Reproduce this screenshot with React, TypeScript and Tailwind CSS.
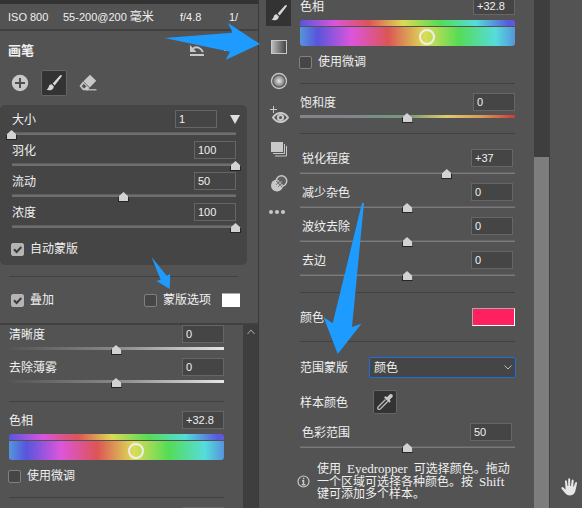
import React, { useState } from "react";

const songti = "font-['Liberation_Sans','Noto_Sans_CJK_SC',sans-serif]";

function NumberBox({ label, value }: { label: string; value: string }) {
  return (
    <input
      type="text"
      aria-label={label}
      defaultValue={value}
      className="block h-[18px] w-[42px] shrink-0 border border-[#666] bg-[#454545] pl-[3px] text-[11px] leading-4 text-[#f0f0f0] outline-none"
    />
  );
}

type Track = "plain" | "thin" | "gray" | "saturation";

const tracks: Record<Track, string> = {
  plain: "bg-[linear-gradient(#5e5e5e_0_1px,#6e6e6e_1px)] bg-size-[100%_3px] bg-[position:0_2px]",
  thin: "bg-[linear-gradient(#646464_0_1px,#7a7a7a_1px)] bg-size-[100%_2px] bg-[position:0_3px]",
  gray: "bg-[linear-gradient(90deg,#555,#888_50%,#e6e6e6)] bg-size-[100%_3px] bg-[position:0_2px]",
  saturation:
    "bg-[linear-gradient(90deg,#878389,#87818b_18%,#75918b_35%,#769976_50%,#dccc6d_68%,#db9c58_84%,#cd3a3a)] bg-size-[100%_3px] bg-[position:0_2px]",
};

function Slider({ label, value, min = 0, max = 100, track = "plain" }: { label: string; value: number; min?: number; max?: number; track?: Track }) {
  return (
    <div className={`h-[10px] bg-no-repeat ${tracks[track]}`}>
      <input
        type="range"
        aria-label={label}
        min={min}
        max={max}
        defaultValue={value}
        className="-mx-[6px] block h-[10px] w-[calc(100%+11px)] cursor-pointer appearance-none bg-transparent outline-none [&::-webkit-slider-thumb]:h-[10px] [&::-webkit-slider-thumb]:w-[11px] [&::-webkit-slider-thumb]:appearance-none [&::-webkit-slider-thumb]:bg-[linear-gradient(90deg,#252525_1px,transparent_1px_10px,#252525_10px),linear-gradient(#d2d2d2_9px,#252525_9px)] [&::-webkit-slider-thumb]:[clip-path:polygon(50%_0,100%_50%,100%_100%,0_100%,0_50%)]"
      />
    </div>
  );
}

type RowProps = { label: string; text: string; value: number; min?: number; max?: number; track?: Track };

function SliderRow({ label, text, value, min, max, track, inset = "" }: RowProps & { inset?: string }) {
  return (
    <div>
      <div className={`mb-[2px] flex items-center justify-between ${inset}`}>
        <span className="pt-[2px]">{label}</span>
        <NumberBox label={label} value={text} />
      </div>
      <Slider label={label} value={value} min={min} max={max} track={track} />
    </div>
  );
}

function Check({ label, checked = false }: { label: string; checked?: boolean }) {
  const [on, setOn] = useState(checked);
  return (
    <label className="flex items-center gap-[6px]">
      <span className="grid size-[13px] shrink-0">
        <input
          type="checkbox"
          checked={on}
          onChange={() => setOn(!on)}
          className="col-start-1 row-start-1 size-[13px] appearance-none rounded-[2px] border border-[#808080] bg-[#464646] checked:border-[#b4b4b4] checked:bg-[#b4b4b4]"
        />
        {on && (
          <svg viewBox="0 0 13 13" className="pointer-events-none col-start-1 row-start-1 size-[13px]" fill="none" stroke="#3c3c3c" strokeWidth="2">
            <path d="M3 6.3 5.6 9 10.3 4" />
          </svg>
        )}
      </span>
      <span>{label}</span>
    </label>
  );
}

function Hue() {
  return (
    <div>
      <div className="mb-[5px] flex items-center justify-between">
        <span className="pt-[2px]">色相</span>
        <NumberBox label="色相" value="+32.8" />
      </div>
      <div className="h-[6px] rounded-t-[3px] bg-[linear-gradient(90deg,#5955dc,#d955dc_16%,#dc5555_32%,#dcda55_48%,#55dc55_65%,#55dcda_82%,#5959dc_97%,#6a55dc)]" />
      <div className="mt-px h-[19px] rounded-b-[3px] bg-[linear-gradient(90deg,#5595dc,#5755dc_8%,#dc55dc_24%,#dc5555_41%,#dcdc55_58%,#55dc55_74%,#55dcdc_91%,#5595dc)]">
        <input
          type="range"
          aria-label="色相"
          min={-180}
          max={180}
          step={0.1}
          defaultValue={32.8}
          className="-mx-2 block h-[20px] w-[calc(100%+16px)] appearance-none bg-transparent outline-none [&::-webkit-slider-thumb]:size-4 [&::-webkit-slider-thumb]:appearance-none [&::-webkit-slider-thumb]:rounded-full [&::-webkit-slider-thumb]:border-2 [&::-webkit-slider-thumb]:border-[#eee]"
        />
      </div>
    </div>
  );
}

function Brush() {
  return (
    <svg viewBox="0 0 18 18" className="size-[18px]" fill="#d6d6d6">
      <path d="M16.8 1.2c-1-.6-2 .4-3 1.5L7.7 9.4l2 2 5.6-7.2c.8-1 2-2.4 1.5-3zM6.7 10.2c-1.5 0-2.5.8-2.9 2.2-.3 1.3-1 2.6-2.6 3.2 3 1.5 7.2.7 7.7-3.2Z" />
    </svg>
  );
}

function Eraser() {
  return (
    <svg viewBox="0 0 18 18" className="size-[18px]" fill="#c8c8c8">
      <path d="M11 .8 17.200 6.800 10.800 13.600 4.400 7.200Z" />
      <path d="m4 7.600 6.400 6.400-1.600 2.200H4L.5 12ZM4.800 9.800 2.600 12.200 5 14.600 7.400 12.400Z" fillRule="evenodd" />
      <path d="M7 15.200h10.500v1.200H7z" />
    </svg>
  );
}

function LeftPanel() {
  return (
    <aside className="flex w-[259px] shrink-0 flex-col overflow-hidden border-r border-[#393939]">
      <div className="h-1 shrink-0 bg-[#333]" />
      <div className="flex h-[25px] shrink-0 items-center pl-2 text-[11px] whitespace-pre">
        <span className="w-[55px]">ISO 800</span>
        <span className="w-[117px]">
          55-200@200 <span className="text-[12px]">毫米</span>
        </span>
        <span className="w-[49px]">f/4.8</span>
        <span>1/</span>
      </div>
      <div className="h-[2px] shrink-0 bg-[#414141]" />
      <div className="flex h-[37px] shrink-0 items-center justify-between pr-[28px] pl-2">
        <h1 className="pt-[2px] text-[13px] font-bold">画笔</h1>
        <div className="flex items-center gap-5">
          <button aria-label="重置">
            <svg viewBox="0 0 14 12" className="h-3 w-[14px]" fill="none" stroke="#c8c8c8">
              <path d="M0 11h14" strokeWidth="2" />
              <path d="M3 4.500q6-3.500 10 3.500" strokeWidth="2" />
              <path d="M0 1v7h6.500Z" fill="#c8c8c8" stroke="none" />
            </svg>
          </button>
          <button aria-label="更多" className="flex gap-[2px]">
            <i className="size-[2px] bg-[#c8c8c8]" />
            <i className="size-[2px] bg-[#c8c8c8]" />
          </button>
        </div>
      </div>
      <div className="mt-[2px] flex h-[26px] shrink-0 items-center pl-[11px]">
        <button aria-label="新建">
          <svg viewBox="0 0 18 18" className="size-[18px]">
            <circle cx="9" cy="9" r="8.200" fill="#c8c8c8" />
            <path d="M9 4v10M4 9h10" stroke="#505050" strokeWidth="2" />
          </svg>
        </button>
        <button aria-label="画笔" className="ml-3 grid size-[26px] place-items-center rounded-[2px] border border-[#656565] bg-[#333]">
          <Brush />
        </button>
        <button aria-label="橡皮擦" className="ml-3">
          <Eraser />
        </button>
      </div>
      <section className="mt-[9px] mr-[11px] h-[160px] shrink-0 rounded-[5px] bg-[#454545] pt-[5px] pr-[11px] pl-3">
        <div className="mb-[2px] flex items-center">
          <span className="flex-1 pt-[2px]">大小</span>
          <NumberBox label="大小" value="1" />
          <button aria-label="展开" className="-mr-1 ml-[13px] border-x-5 border-t-9 border-x-transparent border-t-[#e0e0e0]" />
        </div>
        <Slider label="大小" value={0} />
        <div className="mt-px flex flex-col gap-px">
          <SliderRow label="羽化" text="100" value={100} />
          <SliderRow label="流动" text="50" value={50} />
          <SliderRow label="浓度" text="100" value={100} />
        </div>
        <div className="mt-2 -ml-px flex">
          <Check label="自动蒙版" checked />
        </div>
      </section>
      <hr className="mt-[11px] mr-5 ml-[9px] border-[#414141]" />
      <div className="flex h-[46px] shrink-0 items-center pr-[18px] pl-[11px]">
        <Check label="叠加" checked />
        <div className="ml-auto flex items-center gap-[11px]">
          <Check label="蒙版选项" />
          <button aria-label="蒙版颜色" className="h-[14px] w-[18px] border-t border-[#aaa] bg-white" />
        </div>
      </div>
      <div className="h-[2px] shrink-0 bg-[#414141]" />
      <div className="flex min-h-0 flex-1">
        <div className="min-w-0 flex-1 pr-[19px] pl-[9px]">
          <div className="flex flex-col gap-[3px]">
            <SliderRow label="清晰度" text="0" value={0} min={-100} track="gray" />
            <SliderRow label="去除薄雾" text="0" value={0} min={-100} track="gray" />
          </div>
          <hr className="mt-[13px] mb-[9px] border-[#414141]" />
          <Hue />
          <div className="mt-2 -ml-px flex">
            <Check label="使用微调" />
          </div>
          <hr className="mt-[13px] mb-[9px] border-[#414141]" />
          <div className="flex justify-end">
            <NumberBox label="饱和度" value="" />
          </div>
        </div>
        <div className="flex w-[15px] shrink-0 justify-center bg-[#3e3e3e] pt-1">
          <svg viewBox="0 0 8 6" className="h-[6px] w-2" fill="none" stroke="#aaa">
            <path d="m.5 5 3.500-4 3.500 4" />
          </svg>
        </div>
      </div>
    </aside>
  );
}

function ToolRail() {
  return (
    <nav aria-label="蒙版工具" className="flex w-[41px] shrink-0 flex-col items-start pl-[7px]">
      <button aria-label="画笔" className="grid h-[26px] w-[25px] place-items-center bg-[#333]">
        <Brush />
      </button>
      <button aria-label="线性渐变" className="mt-[14px] ml-[5px] h-[14px] w-4 border border-[#c8c8c8] bg-linear-to-r from-[#bbb] to-[#484848]" />
      <button aria-label="径向渐变" className="mt-[18px] ml-[4px]">
        <svg viewBox="0 0 18 18" className="size-[18px]">
          <defs>
            <radialGradient id="radial-tool">
              <stop offset="0.100" stopColor="#ddd" />
              <stop offset="1" stopColor="#777" />
            </radialGradient>
          </defs>
          <circle cx="9" cy="9" r="7.500" fill="#535353" stroke="#c8c8c8" strokeWidth="1.300" />
          <circle cx="9" cy="9" r="5.800" fill="url(#radial-tool)" />
        </svg>
      </button>
      <button aria-label="红眼" className="mt-[16px] ml-[3px]">
        <svg viewBox="0 0 20 18" className="h-[18px] w-5" fill="none" stroke="#c8c8c8">
          <path d="M4.500 0v7M1 3.500h7" />
          <path d="M4 11.500q3-4.500 7.500-4.500t7.500 4.500q-3 4.500-7.500 4.500t-7.500-4.500Z" strokeWidth="2" />
          <circle cx="11.500" cy="11.500" r="3.600" fill="#c8c8c8" stroke="none" />
          <circle cx="11.500" cy="11.500" r="1.500" fill="#535353" stroke="none" />
        </svg>
      </button>
      <button aria-label="快照" className="mt-[18px] ml-[5px]">
        <svg viewBox="0 0 16 15" className="h-[15px] w-4">
          <path d="M0 0h12v10H0z" fill="#c8c8c8" />
          <path d="M13.500 2v9.500H2M15.500 4v10H4" fill="none" stroke="#c8c8c8" />
        </svg>
      </button>
      <button aria-label="预设" className="mt-[18px] ml-[5px]">
        <svg viewBox="0 0 17 17" className="size-[17px]">
          <circle cx="6" cy="10.500" r="6" fill="#c8c8c8" />
          <circle cx="10.500" cy="6" r="5.300" fill="#777" fillOpacity="0.400" stroke="#c8c8c8" strokeWidth="1.400" />
          <path d="m5 6 6 6M7 4l6 6M5 10l7-7M7 12l6-6" stroke="#535353" strokeWidth=".6" />
        </svg>
      </button>
      <button aria-label="更多" className="mt-[18px] ml-[3px] flex gap-[2px]">
        <i className="size-1 rounded-full bg-[#c8c8c8]" />
        <i className="size-1 rounded-full bg-[#c8c8c8]" />
        <i className="size-1 rounded-full bg-[#c8c8c8]" />
      </button>
    </nav>
  );
}

function RightPanel() {
  return (
    <main className="min-w-0 flex-1 pr-[19px]">
      <div className="-mt-[3px]">
        <Hue />
      </div>
      <div className="mt-2 -ml-px flex">
        <Check label="使用微调" />
      </div>
      <hr className="mt-[13px] mb-[9px] border-[#414141]" />
      <SliderRow label="饱和度" text="0" value={0} min={-100} track="saturation" />
      <hr className="mt-[10px] mb-[15px] border-[#414141]" />
      <div className="flex flex-col gap-1">
        <SliderRow label="锐化程度" text="+37" value={37} min={-100} track="thin" inset="px-[2px]" />
        <SliderRow label="减少杂色" text="0" value={0} min={-100} track="thin" inset="px-[2px]" />
        <SliderRow label="波纹去除" text="0" value={0} min={-100} track="thin" inset="px-[2px]" />
        <SliderRow label="去边" text="0" value={0} min={-100} track="thin" inset="px-[2px]" />
      </div>
      <hr className="mt-[11px] mb-[15px] border-[#414141]" />
      <div className="flex items-center justify-between">
        <span className="pt-[2px]">颜色</span>
        <button aria-label="颜色" className="h-[18px] w-[43px] border border-t-[#aaa] border-r-white border-b-white border-l-[#aaa] bg-[#ff215f]" />
      </div>
      <hr className="mt-[15px] mb-[15px] border-[#414141]" />
      <div className="-mr-px flex items-center">
        <label htmlFor="range-mask" className="w-[69px] shrink-0">
          范围蒙版
        </label>
        <div className="grid flex-1 items-center">
          <select id="range-mask" className="col-start-1 row-start-1 h-[21px] appearance-none rounded-[2px] border border-[#1c6fdc] bg-[#454545] pl-1 text-[12px] text-[#f0f0f0] outline-none">
            <option>颜色</option>
            <option>明亮度</option>
          </select>
          <svg viewBox="0 0 8 5" className="pointer-events-none col-start-1 row-start-1 mr-1 h-[5px] w-2 justify-self-end" fill="none" stroke="#bbb">
            <path d="m.5.5 3.500 3.500L7.500.5" />
          </svg>
        </div>
      </div>
      <div className="mt-3 flex items-center">
        <span className="w-[73px] pt-[2px]">样本颜色</span>
        <button aria-label="吸管" className="grid size-6 place-items-center rounded-[2px] border border-[#656565] bg-[#333]">
          <svg viewBox="0 0 18 18" className="size-[18px]">
            <path d="M9.500 6.500 2.300 13.700Q1 15 2 16t2.500-.3l7.200-7.200" fill="none" stroke="#bbb" strokeWidth="1.300" />
            <path d="m8 4.500 1.300-1.300 2 .8 2-2.300q1.700-1.500 3-.2t-.2 3l-2.300 2 .8 2-1.300 1.300Z" fill="#c8c8c8" />
          </svg>
        </button>
      </div>
      <div className="mt-[9px]">
        <SliderRow label="色彩范围" text="50" value={50} track="thin" inset="pr-[3px] pl-[2px]" />
      </div>
      <div className="mt-[9px] -ml-[3px] flex items-center gap-[7px]">
        <svg viewBox="0 0 13 13" className="size-[13px] shrink-0" fill="none" stroke="#c8c8c8">
          <circle cx="6.500" cy="6.500" r="5.500" strokeWidth="1.200" />
          <path d="M6.500 2.700v1.600M5 5.700h1.500V9.500M4.800 9.700h3.600" strokeWidth="1.500" />
        </svg>
        <p className="leading-3 whitespace-nowrap">
          使用<span className="mx-[6px] font-['Liberation_Serif',serif] text-[13px] leading-none">Eyedropper</span>可选择颜色。拖动
          <br />
          一个区域可选择各种颜色。按<span className="ml-[6px] font-['Liberation_Serif',serif] text-[13px] leading-none">Shift</span>
          <br />
          键可添加多个样本。
        </p>
      </div>
    </main>
  );
}

export default function App() {
  return (
    <div className={`relative flex h-screen overflow-hidden bg-[#535353] text-[12px] leading-4 text-[#f0f0f0] ${songti}`}>
      <LeftPanel />
      <ToolRail />
      <RightPanel />
      <div className="w-4 shrink-0 border-r border-[#414141] bg-[#3e3e3e] pt-[157px]">
        <div className="h-full bg-[#7d7d7d]" />
      </div>
      <div className="flex w-8 shrink-0 items-end justify-end pr-1 pb-3">
        <svg viewBox="0 0 17 18" className="h-[18px] w-[17px]" fill="#e6e6e6">
          <path d="M4.500 10 4 3.500q0-1.200.9-1.200t1 1.200L6.600 8h.6V1.500Q7.200.3 8.200.3t1 1.200V8h.7l.8-5.500q.2-1.200 1.100-1.100t.9 1.300L12.200 8.500h.6l1.400-3.700q.4-1 1.200-.7t.6 1.400L14.600 12q-.8 5-5.600 5.500-3 0-4.800-2.300L.6 10.800q-.6-1 .2-1.500t1.600.2l2.300 2.300Z" />
        </svg>
      </div>
      <svg viewBox="0 0 582 508" className="pointer-events-none absolute top-0 left-0 h-[508px] w-[582px]" fill="#1e9bff">
        <path d="M164.500 38 232.500 32.700 228 23 260 44 225.500 60 230 51.700Z" />
        <path d="M151.500 257 166.700 275.700 170.200 274 169.700 289 156.500 281 160.700 279.700Z" />
        <path d="M362 203H364L352 327 361.500 323.700 337.700 354 323.500 317 332.700 323.300Z" />
      </svg>
    </div>
  );
}
